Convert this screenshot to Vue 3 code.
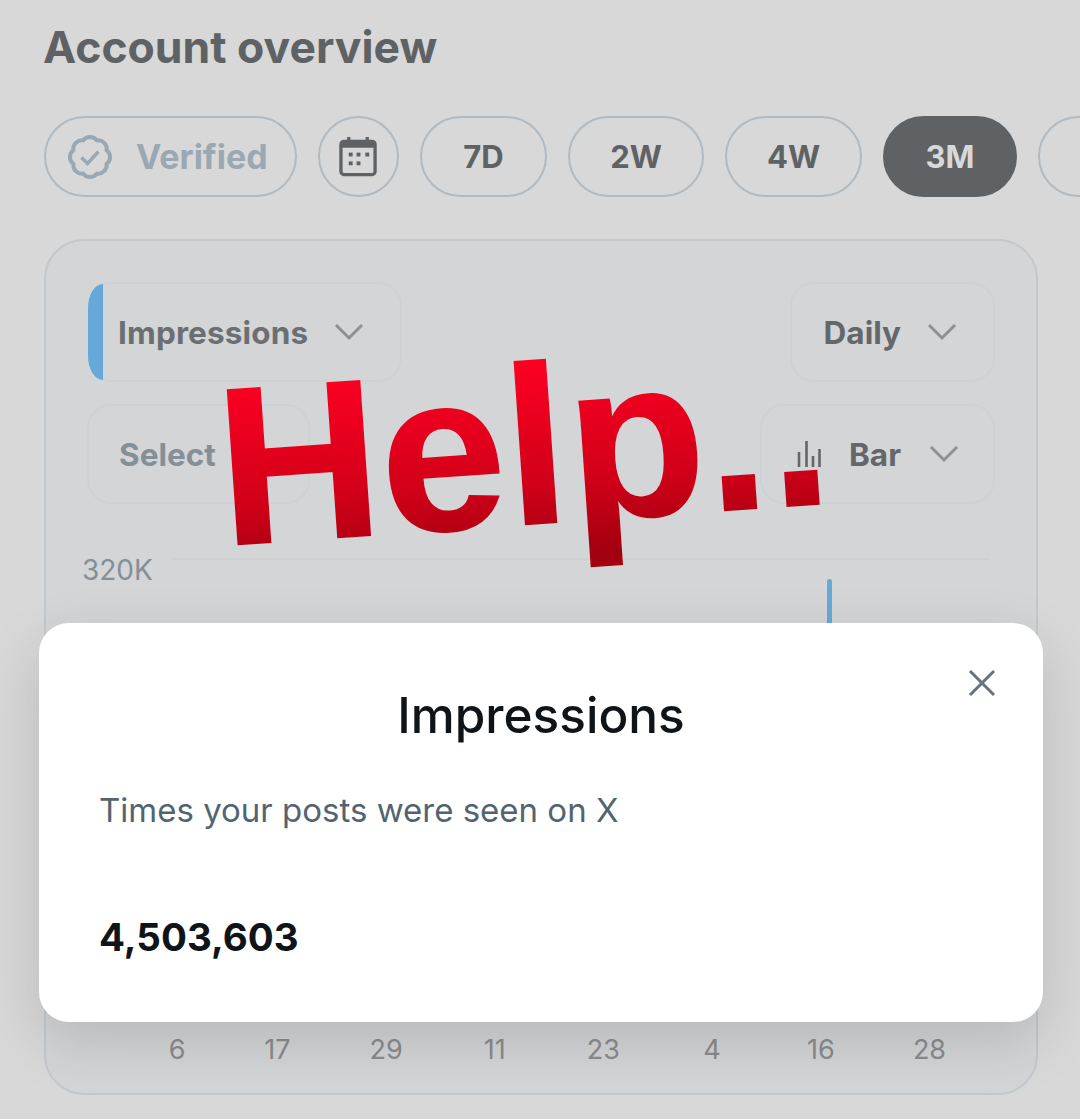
<script setup>
const ranges = [
  { label: '7D', width: 127, active: false },
  { label: '2W', width: 136, active: false },
  { label: '4W', width: 137, active: false },
  { label: '3M', width: 134, active: true },
  { label: '', width: 120, active: false }, // next pill runs off the screen
];

const ticks = ['6', '17', '29', '11', '23', '4', '16', '28'];

// scalloped outline for the verified badge
const lobes = 8;
const badgeR = 18;
const badgePoints = Array.from({ length: lobes }, (_, i) => {
  const a = (Math.PI * 2 * i) / lobes - Math.PI / 2 + Math.PI / lobes;
  return [24 + badgeR * Math.cos(a), 24 + badgeR * Math.sin(a)];
});
const badgePath =
  `M${badgePoints[0][0].toFixed(2)} ${badgePoints[0][1].toFixed(2)}` +
  badgePoints
    .map((_, i) => {
      const p = badgePoints[(i + 1) % lobes];
      return `A8.6 8.6 0 0 1 ${p[0].toFixed(2)} ${p[1].toFixed(2)}`;
    })
    .join('') +
  'Z';
</script>

<template>
  <div class="page">
    <h1 class="title">Account overview</h1>

    <div class="ranges">
      <div class="pill pill--verified">
        <svg class="badge" viewBox="0 0 48 48" fill="none" stroke="currentColor">
          <path :d="badgePath" stroke-width="4" />
          <path d="M15.5 24.5l6 6 11-12" stroke-width="3.4" />
        </svg>
        <span>Verified</span>
      </div>
      <div class="pill pill--icon">
        <svg class="calendar" viewBox="0 0 40 42" fill="none" stroke="currentColor">
          <rect x="2" y="5.5" width="35" height="34" rx="3" stroke-width="3.4" />
          <path d="M2 9.5h35" stroke-width="5" />
          <path d="M10 1v6M29 1v6" stroke-width="3.4" />
          <g fill="currentColor" stroke="none">
            <rect x="10" y="17" width="4" height="4" />
            <rect x="18" y="17" width="4" height="4" />
            <rect x="27" y="17" width="4" height="4" />
            <rect x="10" y="26" width="4" height="4" />
            <rect x="18" y="26" width="4" height="4" />
          </g>
        </svg>
      </div>
      <div
        v-for="r in ranges"
        :key="r.label"
        class="pill"
        :class="{ 'pill--active': r.active }"
        :style="{ width: r.width + 'px' }"
      >
        {{ r.label }}
      </div>
    </div>

    <div class="card">
      <div class="controls">
        <div class="select select--metric">
          <div class="metric-bar"></div>
          <span>Impressions</span>
          <svg class="chevron" viewBox="0 0 30 18" fill="none" stroke="currentColor"><path d="M2 2l13 13L28 2" stroke-width="3" /></svg>
        </div>
        <div class="select">
          <span>Daily</span>
          <svg class="chevron" viewBox="0 0 30 18" fill="none" stroke="currentColor"><path d="M2 2l13 13L28 2" stroke-width="3" /></svg>
        </div>
      </div>
      <div class="controls">
        <div class="select select--empty">
          <span>Select</span>
        </div>
        <div class="select select--type">
          <svg class="bars" viewBox="0 0 24 28" fill="none" stroke="currentColor" stroke-width="2.6">
            <path d="M2 27V12M9.500 27V1M16 27V16M22.500 27V9" />
          </svg>
          <span>Bar</span>
          <svg class="chevron" viewBox="0 0 30 18" fill="none" stroke="currentColor"><path d="M2 2l13 13L28 2" stroke-width="3" /></svg>
        </div>
      </div>

      <div class="chart">
        <div class="grid-row">
          <span class="y-label">320K</span>
          <div class="grid-line"></div>
        </div>
        <div class="plot">
          <div class="bar"></div>
        </div>
        <div class="axis">
          <span v-for="t in ticks" :key="t" class="tick">{{ t }}</span>
        </div>
      </div>
    </div>

    <span class="help">Help..</span>

    <div class="modal">
      <svg class="close" viewBox="0 0 28 28" fill="none" stroke="currentColor" stroke-width="3">
        <path d="M2 2l24 24M26 2L2 26" />
      </svg>
      <h2 class="modal-title">Impressions</h2>
      <p class="modal-desc">Times your posts were seen on X</p>
      <p class="modal-value">4,503,603</p>
    </div>
  </div>
</template>

<style scoped>
.page {
  position: relative;
  box-sizing: border-box;
  width: 1080px;
  height: 1119px;
  padding: 20px 0 0 44px;
  overflow: hidden;
  background: #d8d8d8;
  font-family: Inter, "Liberation Sans", sans-serif;
}

.title {
  margin: 0 0 0 -1px;
  font-size: 44.5px;
  line-height: 54px;
  font-weight: 700;
  color: #5f6265;
}

.ranges {
  display: flex;
  gap: 21px;
  margin-top: 42px;
  width: 1100px;
}

.pill {
  display: flex;
  flex: none;
  align-items: center;
  justify-content: center;
  box-sizing: border-box;
  height: 81px;
  border: 2px solid #b0bac2;
  border-radius: 41px;
  font-size: 31px;
  font-weight: 700;
  color: #5f6265;
}

.pill--verified {
  justify-content: flex-start;
  width: 253px;
  padding-left: 20px;
  gap: 22px;
  color: #9aa8b3;
  font-size: 34px;
}

.badge {
  width: 48px;
  height: 48px;
}

.pill--icon {
  width: 81px;
}

.calendar {
  width: 39px;
  height: 41px;
}

.pill--active {
  background: #5f6265;
  border-color: #5f6265;
  color: #d8d8d8;
}

.card {
  box-sizing: border-box;
  width: 994px;
  height: 856px;
  margin-top: 42px;
  padding: 41px 41px 0 42px;
  border: 2px solid #c3c8cd;
  border-radius: 40px;
  background: #d4d5d7;
}

.controls {
  display: flex;
  justify-content: space-between;
  margin-bottom: 22px;
}

.select {
  display: flex;
  align-items: center;
  gap: 26px;
  box-sizing: border-box;
  height: 100px;
  padding: 0 36px 0 32px;
  border: 2px solid #cfd1d4;
  border-radius: 24px;
  font-size: 31.5px;
  font-weight: 700;
  color: #63676a;
}

.select--metric {
  width: 314px;
  padding-left: 0;
  gap: 0;
}

.select--metric span {
  margin: 0 26px 0 15px;
  letter-spacing: 0.15px;
  color: #6b6f72;
}

.metric-bar {
  flex: none;
  align-self: stretch;
  width: 15px;
  margin: 0 0 0 -2px;
  border-radius: 15px 0 0 15px / 24px 0 0 24px;
  background: #66a9d9;
}

.select--empty {
  width: 223px;
  margin-left: -1px;
  padding-left: 30px;
  color: #858f97;
}

.select--type {
  width: 235px;
  gap: 28px;
  padding-left: 35px;
}

.select--type .chevron {
  margin-left: auto;
}

.chevron {
  flex: none;
  width: 30px;
  height: 18px;
  color: #8e9092;
}

.bars {
  flex: none;
  width: 24px;
  height: 28px;
  color: #63676a;
}

.chart {
  margin: 54px 6px 0 -6px;
}

.grid-row {
  display: flex;
  align-items: flex-start;
  gap: 20px;
  height: 21px;
}

.y-label {
  width: 70px;
  margin-top: -3px;
  font-size: 28px;
  line-height: 30px;
  color: #858f97;
}

.grid-line {
  flex: 1;
  height: 2px;
  background: #cdcfd1;
}

.plot {
  display: flex;
  height: 454px;
  padding-left: 745px;
}

.bar {
  width: 5px;
  height: 100px;
  border-radius: 3px 3px 0 0;
  background: #66a9d9;
}

.axis {
  display: flex;
  padding-left: 49px;
  font-size: 27px;
  color: #8a8c8e;
}

.tick {
  width: 108.7px;
  flex: none;
  text-align: center;
}

.tick:first-child {
  width: 92px;
}

.help {
  position: absolute;
  left: 217px;
  top: 316px;
  padding-right: 10px;
  font-family: "Liberation Sans", Arial, sans-serif;
  font-size: 225px;
  line-height: 260px;
  font-weight: 700;
  white-space: nowrap;
  background: linear-gradient(180deg, #ff0022 15%, #d00018 65%, #a30010 92%);
  -webkit-background-clip: text;
  background-clip: text;
  color: transparent;
  -webkit-text-stroke: 1.5px transparent;
  transform: rotate(-4deg);
}

.modal {
  position: absolute;
  left: 39px;
  top: 623px;
  box-sizing: border-box;
  width: 1004px;
  height: 399px;
  padding: 58px 61px 0;
  border-radius: 30px;
  background: #fff;
  box-shadow: 0 20px 60px rgba(0, 0, 0, 0.14);
}

.close {
  position: absolute;
  top: 46px;
  right: 47px;
  width: 28px;
  height: 28px;
  color: #66727c;
}

.modal-title {
  margin: 0;
  font-size: 49.5px;
  line-height: 68px;
  font-weight: 500;
  text-align: center;
  color: #0f1419;
}

.modal-desc {
  margin: 41px 0 0 -1px;
  font-size: 33px;
  line-height: 40px;
  color: #536471;
}

.modal-value {
  margin: 84px 0 0 -1px;
  font-size: 38.5px;
  line-height: 46px;
  font-weight: 700;
  color: #0f1419;
}
</style>
